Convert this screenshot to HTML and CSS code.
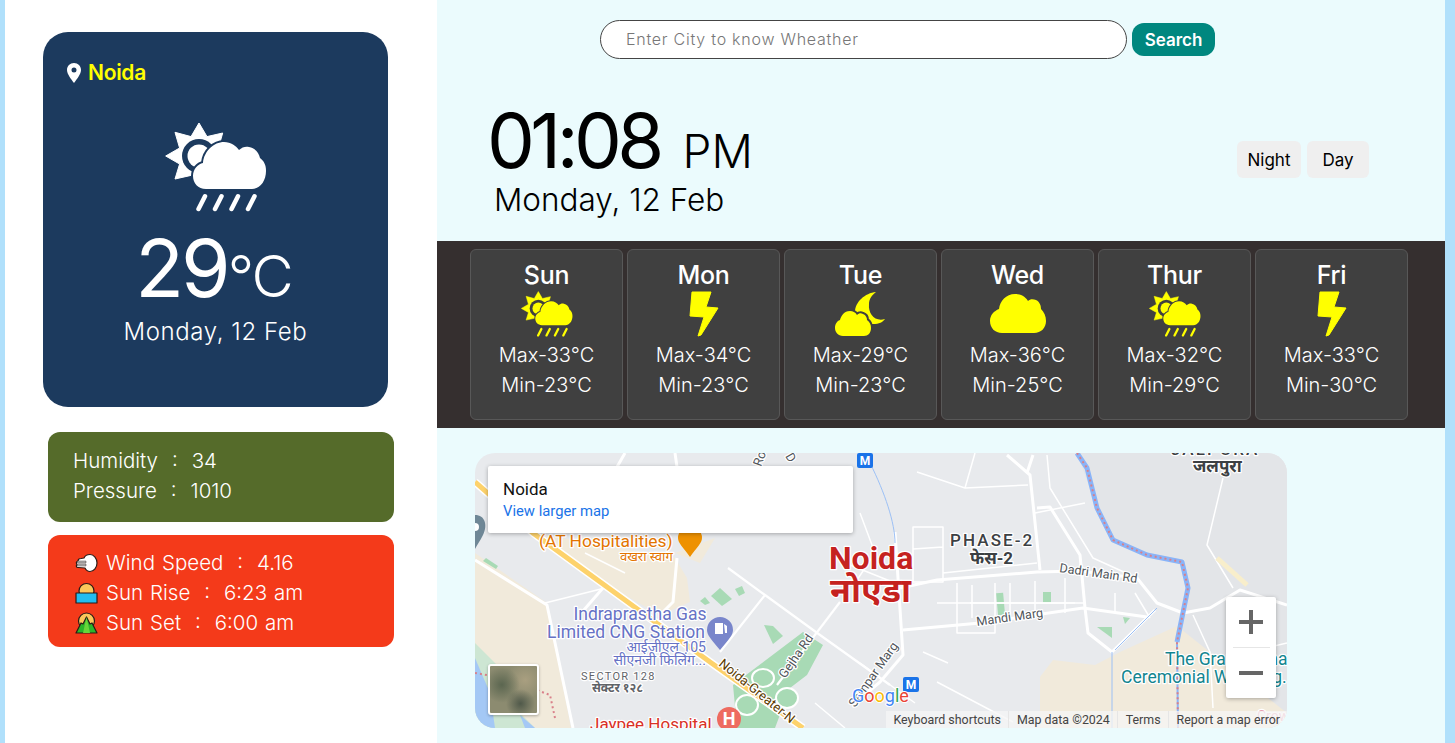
FILE: index.html
```html
<!DOCTYPE html>
<html lang="en">
<head>
<meta charset="utf-8">
<title>Weather</title>
<link rel="stylesheet" href="styles.css">
</head>
<body>
<svg class="defs" aria-hidden="true">
  <symbol id="sun-rain" viewBox="0 0 102 90">
    <polygon class="solid round" points="34,1 42,14.6 57.7,11 53.4,26 53,34 34,60 26,53.4 10,57 14.6,42 0.7,34 14.6,26 10,10.3 26,14.6"/>
    <circle class="cutfill" cx="34" cy="34" r="17"/>
    <circle class="solid" cx="34" cy="34" r="11.500"/>
    <path class="solid cut" d="M41 67C33 67 28 61 28 54C28 47 33 42 38 41C39 29 49 20 59 20C66 20 71 24 74 28C77 25 81 24 84 25C90 26 94 31 95 36C99 39 101 43 101 49C101 59 95 67 87 67Z"/>
    <path class="rain" d="M40 74.3L33.5 87M56.5 74.3L50 87M73 74.3L66.5 87M89.5 74.3L83 87"/>
  </symbol>
  <symbol id="bolt" viewBox="-1 -1 30 46">
    <polygon class="solid round" points="2,0 21,0 16,15 28,16 11,43 8,44 14,25 0,24"/>
  </symbol>
  <symbol id="moon-cloud" viewBox="0 0 51 45">
    <path class="solid" d="M41 0C30 1 20 10 20 20C20 30 30 32 38 32C44 32 48 30 50 27C40 30 33 22 34 12C34 7 37 3 41 0Z"/>
    <path class="solid cut" d="M8 44C3 44 0 40 0 36C0 32 2 29 5 28C6 24 9 19 15 19C18 19 20 20 22 23C24 21 26 21 28 22C31 23 32 26 32 28C35 30 36 33 36 36C36 41 33 44 29 44Z"/>
  </symbol>
  <symbol id="cloud" viewBox="0 0 56 40">
    <path class="solid" d="M12 39C5 39 0 34 0 27C0 21 4 17 9 15C10 7 16 0 25 0C30 0 35 2 38 7C40 5 43 5 46 6C50 8 51 12 51 15C54 18 56 22 56 27C56 34 51 39 44 39Z"/>
  </symbol>
</svg>

<div class="app">
  <aside class="side">
    <section class="now">
      <div class="place">
        <svg class="pin" viewBox="0 0 14 20"><path class="pin-body" fill-rule="evenodd" d="M7 0C3 0 0 3 0 7C0 11 4 16 7 20C10 16 14 11 14 7C14 3 11 0 7 0ZM7 4.500A2.500 2.500 0 1 1 7 9.500A2.500 2.500 0 1 1 7 4.500Z"/></svg>
        <span class="place-name">Noida</span>
      </div>
      <svg class="now-icon"><use href="#sun-rain"/></svg>
      <div class="now-temp">29<span class="now-unit">°C</span></div>
      <div class="now-date">Monday, 12 Feb</div>
    </section>

    <section class="stat stat-green">
      <div>Humidity &nbsp;:&nbsp; 34</div>
      <div>Pressure &nbsp;:&nbsp; 1010</div>
    </section>

    <section class="stat stat-red">
      <div class="stat-row">
        <svg class="emoji" viewBox="0 0 23 19"><path class="e-white" d="M9 4.500C10 2 12 1 15 1C19 1 22 5 22 9.500C22 14 19 18 15 18C13 18 11 16.500 10 14.500L3 14C1 14 1 12 2 11C1 9.500 1 8 3 7.500C3 6 4 5 6 5Z"/><path class="e-gray" d="M2.500 7.500H11V9.500H2.500ZM2.500 10.500H11V12.500H2.500Z"/></svg>
        <span>Wind Speed &nbsp;:&nbsp; 4.16</span>
      </div>
      <div class="stat-row">
        <svg class="emoji" viewBox="0 0 23 22"><circle class="e-sun" cx="11.500" cy="9" r="7.500"/><rect class="e-sea" x="1" y="11" width="21" height="10"/></svg>
        <span>Sun Rise &nbsp;:&nbsp; 6:23 am</span>
      </div>
      <div class="stat-row">
        <svg class="emoji" viewBox="0 0 23 22"><circle class="e-sun" cx="11.500" cy="9" r="8"/><path class="e-hill" d="M1 21L6 11L8 12L11.500 5L15 12L17 11L22 21Z"/><path class="e-hill2" d="M11.500 5L15 21H8Z"/></svg>
        <span>Sun Set &nbsp;:&nbsp; 6:00 am</span>
      </div>
    </section>
  </aside>

  <main class="main">
    <form class="search">
      <input class="search-input" type="text" placeholder="Enter City to know Wheather">
      <button class="search-btn" type="button">Search</button>
    </form>

    <section class="hero">
      <div class="clock">
        <div class="time">01:08 <span class="ampm">PM</span></div>
        <div class="date">Monday, 12 Feb</div>
      </div>
      <div class="modes">
        <button class="mode mode-night" type="button">Night</button>
        <button class="mode mode-day" type="button">Day</button>
      </div>
    </section>

    <section class="forecast">
      <article class="day">
        <h3 class="day-name">Sun</h3>
        <div class="day-icon"><svg class="ic-sun"><use href="#sun-rain"/></svg></div>
        <div class="day-temp">Max-33°C</div>
        <div class="day-temp">Min-23°C</div>
      </article>
      <article class="day">
        <h3 class="day-name">Mon</h3>
        <div class="day-icon"><svg class="ic-bolt"><use href="#bolt"/></svg></div>
        <div class="day-temp">Max-34°C</div>
        <div class="day-temp">Min-23°C</div>
      </article>
      <article class="day">
        <h3 class="day-name">Tue</h3>
        <div class="day-icon"><svg class="ic-moon"><use href="#moon-cloud"/></svg></div>
        <div class="day-temp">Max-29°C</div>
        <div class="day-temp">Min-23°C</div>
      </article>
      <article class="day">
        <h3 class="day-name">Wed</h3>
        <div class="day-icon"><svg class="ic-cloud"><use href="#cloud"/></svg></div>
        <div class="day-temp">Max-36°C</div>
        <div class="day-temp">Min-25°C</div>
      </article>
      <article class="day">
        <h3 class="day-name">Thur</h3>
        <div class="day-icon"><svg class="ic-sun"><use href="#sun-rain"/></svg></div>
        <div class="day-temp">Max-32°C</div>
        <div class="day-temp">Min-29°C</div>
      </article>
      <article class="day">
        <h3 class="day-name">Fri</h3>
        <div class="day-icon"><svg class="ic-bolt"><use href="#bolt"/></svg></div>
        <div class="day-temp">Max-33°C</div>
        <div class="day-temp">Min-30°C</div>
      </article>
    </section>

    <section class="map">
      <svg class="map-canvas" viewBox="0 0 812 275">
        <rect class="m-land" width="812" height="275"/>
        <polygon class="m-east" points="602,0 812,0 812,275 703,275 702,189 713,135 707,109 672,102 638,87 622,55"/>
        <polygon class="m-beige" points="0,100 72,150 96,275 0,275"/>
        <polygon class="m-beige" points="58,80 200,105 212,125 215,149 185,162 162,149 120,125"/>
        <polygon class="m-beige" points="565,224 578,207 620,212 645,199 702,173 812,260 812,275 565,275"/>
        <polygon class="m-beige" points="200,100 240,85 225,110"/>
        <path class="m-lgreen" d="M0 190L30 220L45 260L60 275H0Z"/>
        <path class="m-water" d="M0 205L15 240L20 275H0Z"/>
        <path class="m-water" d="M45 262L60 275H50Z"/>
        <path class="m-park" d="M275 219L328 179L348 192L332 222L315 235L300 275H262L258 232Z"/>
        <rect class="m-green" x="522" y="140" width="7" height="22" transform="rotate(-5 525 150)"/>
        <rect class="m-green" x="568" y="139" width="8" height="11"/>
        <polygon class="m-green" points="622,174 637,174 637,185"/>
        <polygon class="m-green" points="648,164 655,165 650,171"/>
        <polygon class="m-green" points="236,143 245,135 257,146 247,153"/>
        <polygon class="m-green" points="225,148 230,144 235,150 230,152"/>
        <polygon class="m-green" points="260,136 267,133 270,140 264,143"/>
        <polygon class="m-green" points="289,172 298,173 308,183 298,191"/>
        <polygon class="m-green" points="11,105 23,113 21,116 8,108"/>
        <path class="m-road" d="M425 135L462 127L562 119L605 118L662 125L682 150L708 160L735 155L765 137L812 152"/>
        <path class="m-road" d="M428 177L505 170L608 155L672 164"/>
        <path class="m-road" d="M420 79L428 202L405 229L380 250"/>
        <path class="m-road" d="M532 2L555 22L565 117M558 2L552 20"/>
        <path class="m-road" d="M562 55L575 54L605 102L610 155L613 180L637 199L680 157"/>
        <path class="m-road" d="M0 107L72 152L98 275"/>
        <path class="m-road" d="M128 135L108 158M202 105L198 149L185 162"/>
        <path class="m-thin2" d="M253 115L290 142L345 182L415 232M290 142L245 199"/>
        <path class="m-thin2" d="M365 149L302 232"/>
        <path class="m-road" d="M130 35L150 0M200 0L205 35"/>
        <path class="m-thin" d="M442 19L490 35L553 32M490 35L500 0M438 74V129H468V74ZM438 96L468 94M468 120L562 110"/>
        <path class="m-thin" d="M572 2L575 35L618 105L662 125M748 25L732 92L758 135M718 162L735 199L738 255"/>
        <path class="m-thin" d="M462 229L538 269M473 210L448 199M482 130V180H520V130M520 140V170M462 150H610"/>
        <path class="m-thin" d="M150 120L110 100M70 150L130 135M385 210L440 250M340 250L370 275M560 60L610 50M770 200L812 190"/>
        <path class="m-thin" d="M497 132V165M535 130V168M560 128V165M590 125V160M495 150H600M640 140V160M660 140L675 165M385 60L400 100L380 130M370 110L420 130"/>
        <ellipse class="m-oval" cx="288" cy="225" rx="11" ry="9"/>
        <ellipse class="m-oval" cx="312" cy="245" rx="11" ry="10"/>
        <ellipse class="m-oval" cx="272" cy="252" rx="11" ry="10"/>
        <path class="m-tan" d="M742 105L772 132"/>
        <path class="m-blue" d="M395 10C410 40 420 70 420 90M637 199V275M640 197L682 155"/>
        <path class="m-river" d="M602 0L612 15L622 55L638 87L672 102L707 109L713 135L702 189"/>
        <path class="m-river thin" d="M702 189L703 275"/>
        <path class="m-dots" d="M602 0L612 15L622 55L638 87L672 102L707 109L713 135L702 189L703 275"/>
        <path class="m-dots" d="M0 220L30 225L75 242L80 265"/>
        <path class="m-hw" d="M0 29L58 80L235 209L328 275"/>
        <path class="m-hw-line" d="M0 29L58 80L235 209L328 275"/>

        <path class="m-orange" d="M215 104C208 94 203 90 203 85A12 12 0 0 1 227 85C227 90 222 94 215 104Z"/>
        <path class="m-slate" d="M0 62C10 62 13 72 8 82C5 88 2 92 0 96Z"/>
        <circle class="m-white" cx="0" cy="74" r="4"/>
        <path class="m-indigo" d="M245 197C236 186 232 182 232 177A13 13 0 0 1 258 177C258 182 254 186 245 197Z"/>
        <path class="m-white" d="M240 170H248V181H240ZM249 171L252 173V180H250Z"/>
        <circle class="m-red" cx="254" cy="266" r="12"/>
        <text class="t-h" x="254" y="272" text-anchor="middle">H</text>

        <text class="t t-poi" x="64" y="94">(AT Hospitalities)</text>
        <text class="t t-poi-sm" x="145" y="108">वखरा स्वाग</text>
        <text class="t t-gas" x="165" y="167" text-anchor="middle">Indraprastha Gas</text>
        <text class="t t-gas" x="72" y="185">Limited CNG Station</text>
        <text class="t t-gas-sm" x="231" y="199" text-anchor="end">आईजीएल 105</text>
        <text class="t t-gas-sm" x="231" y="212" text-anchor="end">सीएनजी फिलिंग...</text>
        <text class="t t-sector" x="106" y="227">SECTOR 128</text>
        <text class="t t-sector-hi" x="117" y="239">सेक्टर १२८</text>
        <text class="t t-hosp" x="115" y="277">Jaypee Hospital</text>
        <text class="t t-city" x="354" y="116">Noida</text>
        <text class="t t-city-hi" x="355" y="149">नोएडा</text>
        <text class="t t-phase" x="475" y="93">PHASE-2</text>
        <text class="t t-phase-hi" x="495" y="111">फेस-2</text>
        <text class="t t-road" transform="translate(584 119) rotate(8)">Dadri Main Rd</text>
        <text class="t t-road" transform="translate(502 173) rotate(-8)">Mandi Marg</text>
        <text class="t t-road" transform="translate(310 226) rotate(-55)">Gejha Rd</text>
        <text class="t t-brown" transform="translate(243 212) rotate(39)">Noida-Greater-N</text>
        <text class="t t-road" transform="translate(380 255) rotate(-55)">Sampar Marg</text>
        <text class="t t-road" transform="translate(286 14) rotate(-70)">Ro</text>
        <text class="t t-road" transform="translate(310 3) rotate(60)">D</text>
        <text class="t t-teal" x="690" y="212">The Grand Luna</text>
        <text class="t t-teal" x="646" y="230">Ceremonial Wedding..</text>
        <text class="t t-phase" x="696" y="2">JALPURA</text>
        <text class="t t-phase-hi" x="718" y="19">जलपुरा</text>
        <text class="t t-crow" x="782" y="268">Crow</text>

        <rect class="m-metro" x="382" y="0" width="16" height="15" rx="2"/>
        <text class="t-m" x="390" y="12" text-anchor="middle">M</text>
        <rect class="m-metro" x="428" y="224" width="16" height="15" rx="2"/>
        <text class="t-m" x="436" y="236" text-anchor="middle">M</text>
        <text class="t-google" x="377" y="249"><tspan class="g-b">G</tspan><tspan class="g-r">o</tspan><tspan class="g-y">o</tspan><tspan class="g-b">g</tspan><tspan class="g-g">l</tspan><tspan class="g-r">e</tspan></text>
      </svg>

      <div class="map-card">
        <div class="map-title">Noida</div>
        <a class="map-link">View larger map</a>
      </div>

      <div class="map-thumb"></div>

      <div class="zoom">
        <svg class="zoom-ic" viewBox="0 0 24 24"><path d="M10 0h4v10h10v4H14v10h-4V14H0v-4h10z"/></svg>
        <span class="zoom-sep"></span>
        <svg class="zoom-ic" viewBox="0 0 24 24"><path d="M0 10h24v4H0z"/></svg>
      </div>

      <div class="attrib">
        <span class="attrib-item">Keyboard shortcuts</span>
        <span class="attrib-item">Map data ©2024</span>
        <span class="attrib-item">Terms</span>
        <span class="attrib-item">Report a map error</span>
      </div>
    </section>
  </main>
</div>
</body>
</html>
```

FILE: styles.css
```css
* { box-sizing: border-box; }
html, body { margin: 0; height: 100%; }
body {
  font-family: "Inter", "Noto Sans", sans-serif;
  background: #b0e0fb;
  overflow: hidden;
}
.defs { position: absolute; width: 0; height: 0; }

.solid { fill: currentColor; }
.round { stroke: currentColor; stroke-width: 1; stroke-linejoin: round; }
.cut { stroke: var(--cut); stroke-width: 4; paint-order: stroke; }
.cutfill { fill: var(--cut); }
.rain { fill: none; stroke: currentColor; stroke-width: 4.5; stroke-linecap: round; }

.app {
  display: flex;
  height: 743px;
  padding: 0 10px 0 5px;
}
.side {
  width: 432px;
  flex: none;
  background: #fff;
  padding: 32px 0 0 38px;
}
.now {
  --cut: #1c3a5e;
  width: 345px;
  height: 375px;
  background: #1c3a5e;
  border-radius: 25px;
  color: #fff;
  display: flex;
  flex-direction: column;
  align-items: center;
  padding-top: 31px;
}
.place {
  align-self: flex-start;
  display: flex;
  align-items: center;
  gap: 7px;
  padding-left: 24px;
  height: 20px;
}
.pin { width: 14px; height: 20px; }
.pin-body { fill: #fff; }
.place-name {
  color: #ffff00;
  font-size: 21px;
  font-weight: 600;
  letter-spacing: -0.3px;
  margin-top: -2px;
}
.now-icon { width: 102px; height: 90px; margin-top: 39px; }
.now-temp {
  font-size: 80px;
  line-height: 80px;
  font-weight: 400;
  margin-top: 16px;
  margin-left: -4px;
  letter-spacing: -3px;
}
.now-unit { font-size: 58px; font-weight: 300; letter-spacing: -2px; }
.now-date {
  font-size: 24px;
  font-weight: 300;
  line-height: 36px;
  margin-top: -2px;
  letter-spacing: .6px;
}

.stat {
  width: 346px;
  margin-left: 5px;
  border-radius: 12px;
  color: #fff;
  font-size: 20.500px;
  font-weight: 300;
  line-height: 30px;
  word-spacing: 1.200px;
}
.stat-green {
  height: 90px;
  margin-top: 25px;
  background: #556b2a;
  padding: 14px 0 0 25px;
}
.stat-red {
  height: 112px;
  margin-top: 13px;
  background: #f43a1a;
  padding: 13px 0 0 27px;
}
.stat-row { display: flex; align-items: center; gap: 8px; }
.emoji { width: 23px; height: 22px; flex: none; }
.emoji * { stroke: #2b1a16; stroke-width: 1.200; stroke-linejoin: round; }
.e-white { fill: #fff; }
.e-gray { fill: #b9b9b9; stroke-width: .4 !important; }
.e-sun { fill: #fbc85a; }
.e-sea { fill: #21bdf0; }
.e-hill { fill: #2bb62b; }
.e-hill2 { fill: #68d63a; stroke: none !important; }

.main {
  flex: 1;
  min-width: 0;
  background: #ebfbfd;
  display: flex;
  flex-direction: column;
}
.search {
  display: flex;
  align-items: center;
  gap: 5px;
  height: 39px;
  margin-top: 20px;
  padding-left: 163px;
}
.search-input {
  width: 527px;
  height: 39px;
  border: 1px solid #444;
  border-radius: 20px;
  background: #fff;
  padding: 0 25px 2px;
  font-family: inherit;
  font-size: 16px;
  font-weight: 300;
  letter-spacing: .75px;
  outline: none;
}
.search-input::placeholder { color: #777; opacity: 1; }
.search-btn {
  width: 83px;
  height: 33px;
  border: 0;
  border-radius: 12px;
  background: #00877f;
  color: #fff;
  font-family: inherit;
  font-size: 17px;
  font-weight: 600;
  padding: 0;
}

.hero {
  height: 182px;
  display: flex;
  align-items: flex-start;
  justify-content: space-between;
  padding: 0 76px 0 50px;
}
.clock { padding-top: 36px; }
.time {
  font-size: 76px;
  line-height: 90px;
  font-weight: 400;
  letter-spacing: -4.6px;
  white-space: nowrap;
}
.ampm { font-size: 46px; font-weight: 300; letter-spacing: 0; margin-left: 6px; }
.date {
  font-size: 31.500px;
  line-height: 44px;
  font-weight: 300;
  padding-left: 7px;
  margin-top: -18px;
}
.modes { display: flex; gap: 6px; padding-top: 82px; }
.mode {
  height: 37px;
  padding: 0;
  border: 0;
  border-radius: 6px;
  background: #efefef;
  color: #000;
  font-family: inherit;
  font-size: 17px;
  font-weight: 400;
}
.mode-night { width: 64px; }
.mode-day { width: 62px; }

.forecast {
  --cut: #404040;
  height: 187px;
  background: #352f2f;
  display: flex;
  gap: 4px;
  padding: 8px 0 8px 33px;
}
.day {
  width: 153px;
  background: #404040;
  border: 1px solid #585858;
  border-radius: 6px;
  color: #fff;
  text-align: center;
}
.day-name {
  margin: 10px 0 0;
  font-size: 25px;
  line-height: 30px;
  font-weight: 500;
  letter-spacing: -.3px;
}
.day-icon {
  color: #ffff00;
  height: 46px;
  margin-top: 1px;
  margin-bottom: 3px;
  display: flex;
  align-items: center;
  justify-content: center;
}
.ic-sun { width: 52px; height: 46px; }
.ic-bolt { width: 30px; height: 46px; }
.ic-moon { width: 51px; height: 45px; }
.ic-cloud { width: 56px; height: 40px; }
.day-temp {
  font-size: 20px;
  line-height: 30px;
  font-weight: 300;
}

.map {
  position: relative;
  width: 812px;
  height: 275px;
  margin: 25px 0 0 38px;
  border-radius: 20px;
  overflow: hidden;
}
.map-canvas { display: block; width: 812px; height: 275px; }
.m-land { fill: #e8eaed; }
.m-east { fill: #e3e5e8; }
.m-beige { fill: #f1eadb; }
.m-lgreen { fill: #cde6d3; }
.m-water { fill: #a4c8f5; }
.m-park, .m-green { fill: #a8dab5; }
.m-oval { fill: #a8dab5; stroke: #fff; stroke-width: 2; }
.m-road { fill: none; stroke: #fff; stroke-width: 3; stroke-linejoin: round; }
.m-thin2 { fill: none; stroke: #fff; stroke-width: 2.200; stroke-linejoin: round; }
.m-thin { fill: none; stroke: #fff; stroke-width: 1.500; stroke-linejoin: round; }
.m-tan { fill: none; stroke: #f8eecb; stroke-width: 5; }
.m-blue { fill: none; stroke: #9cc0f5; stroke-width: 1; }
.m-river { fill: none; stroke: #8ab4f8; stroke-width: 5; stroke-linejoin: round; }
.m-river.thin { stroke-width: 2; }
.m-dots { fill: none; stroke: #d9808a; stroke-width: 2; stroke-dasharray: 2 3; }
.m-hw { fill: none; stroke: #fff; stroke-width: 8; }
.m-hw-line { fill: none; stroke: #fdd26b; stroke-width: 5; }
.m-orange { fill: #ee9100; }
.m-slate { fill: #6f8796; }
.m-white { fill: #fff; }
.m-indigo { fill: #7986cb; }
.m-red { fill: #ee6b60; }
.m-metro { fill: #1a73e8; }

.t {
  font-family: "Roboto", "Noto Sans", sans-serif;
  paint-order: stroke;
  stroke: #fff;
  stroke-width: 2.500px;
  stroke-linejoin: round;
}
.t-poi { font-size: 17.400px; fill: #e37400; }
.t-poi-sm { font-size: 13px; fill: #e37400; }
.t-gas { font-size: 17.500px; fill: #6672c5; }
.t-gas-sm { font-size: 14px; fill: #6672c5; }
.t-sector { font-size: 11px; fill: #5f6368; letter-spacing: 1.300px; }
.t-sector-hi { font-size: 12px; font-weight: 700; fill: #5f6368; }
.t-hosp { font-size: 17px; fill: #d93025; }
.t-city { font-size: 32px; font-weight: 700; fill: #c5221f; }
.t-city-hi { font-size: 34px; font-weight: 700; fill: #c5221f; }
.t-phase { font-size: 17px; fill: #3c4043; letter-spacing: 2.100px; font-weight: 500; }
.t-phase-hi { font-size: 17px; font-weight: 700; fill: #3c4043; }
.t-road { font-size: 12.600px; fill: #50555a; }
.t-brown { font-size: 13px; fill: #5c3b00; }
.t-teal { font-size: 17.500px; fill: #12858f; }
.t-crow { font-size: 14px; fill: #e8a0b0; }
.t-h { font-family: "Roboto", sans-serif; font-size: 18px; font-weight: 700; fill: #fff; }
.t-m { font-family: "Roboto", sans-serif; font-size: 12px; font-weight: 700; fill: #fff; }
.t-google {
  font-family: "Roboto", sans-serif;
  font-size: 18px;
  paint-order: stroke;
  stroke: #fff;
  stroke-width: 2px;
}
.g-b { fill: #4285f4; }
.g-r { fill: #ea4335; }
.g-y { fill: #fbbc05; }
.g-g { fill: #34a853; }

.map-card {
  position: absolute;
  left: 13px;
  top: 13px;
  width: 365px;
  height: 67px;
  background: #fff;
  border-radius: 2px;
  box-shadow: 0 1px 4px rgba(0,0,0,.3);
  padding: 13px 15px;
  font-family: "Roboto", sans-serif;
}
.map-title { font-size: 17px; line-height: 20px; font-weight: 400; color: #111; }
.map-link { display: block; font-size: 14.800px; line-height: 21px; margin-top: 2px; color: #1a73e8; }

.map-thumb {
  position: absolute;
  left: 13px;
  bottom: 13px;
  width: 51px;
  height: 51px;
  border: 2px solid #fff;
  border-radius: 3px;
  box-shadow: 0 1px 3px rgba(0,0,0,.3);
  background:
    radial-gradient(circle at 25% 40%, #5b6650 0, rgba(91,102,80,0) 40%),
    radial-gradient(circle at 65% 80%, #50594a 0, rgba(80,89,74,0) 30%),
    radial-gradient(circle at 75% 30%, #a99f80 0, rgba(169,159,128,0) 40%),
    #8c8b70;
}

.zoom {
  position: absolute;
  left: 751px;
  top: 144px;
  width: 50px;
  height: 101px;
  background: #fff;
  border-radius: 2px;
  box-shadow: 0 1px 4px rgba(0,0,0,.3);
  display: flex;
  flex-direction: column;
  align-items: center;
  justify-content: space-between;
  padding: 13px 0;
}
.zoom-ic { width: 24px; height: 24px; fill: #666; }
.zoom-sep { width: 37px; height: 1px; background: #e6e6e6; }

.attrib {
  position: absolute;
  right: 0;
  bottom: 0;
  height: 17px;
  display: flex;
  background: rgba(245,245,245,.75);
  font-family: "Roboto", sans-serif;
  font-size: 12.400px;
  line-height: 18px;
  color: #444;
  padding-right: 0;
}
.attrib-item { padding: 0 7px; white-space: nowrap; }
.attrib-item + .attrib-item { padding-left: 8px; border-left: 1px solid #e6e6e6; }
```
